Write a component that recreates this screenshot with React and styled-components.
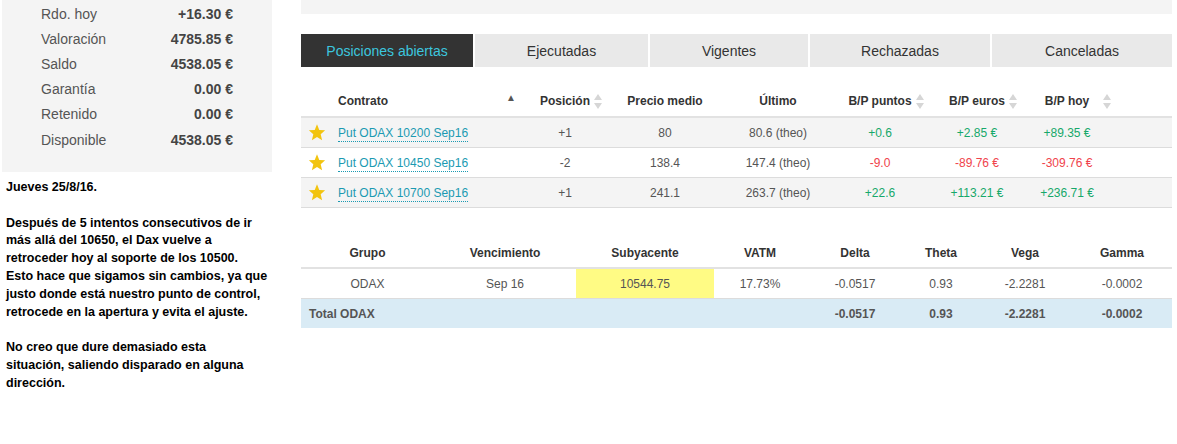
import styled, { createGlobalStyle } from "styled-components";

const GlobalStyle = createGlobalStyle`
	body {
		margin: 0;
		background: #fff;
		font-family: "Liberation Sans", Arial, sans-serif;
	}
`;

const summary = [
	["Rdo. hoy", "+16.30 €"],
	["Valoración", "4785.85 €"],
	["Saldo", "4538.05 €"],
	["Garantía", "0.00 €"],
	["Retenido", "0.00 €"],
	["Disponible", "4538.05 €"],
];

const tabs = [
	["Posiciones abiertas", 172],
	["Ejecutadas", 173],
	["Vigentes", 158],
	["Rechazadas", 180],
	["Canceladas", 180],
];

const positions = [
	["Put ODAX 10200 Sep16", "+1", "80", "80.6 (theo)", "+0.6", "+2.85 €", "+89.35 €", "up"],
	["Put ODAX 10450 Sep16", "-2", "138.4", "147.4 (theo)", "-9.0", "-89.76 €", "-309.76 €", "down"],
	["Put ODAX 10700 Sep16", "+1", "241.1", "263.7 (theo)", "+22.6", "+113.21 €", "+236.71 €", "up"],
];

const POS_COLS = "30px 192px 84px 116px 110px 94px 100px 80px 1fr";
const GRP_COLS = "133px 142px 138px 92px 98px 74px 94px 100px";

const Star = () => (
	<svg width="18" height="17" viewBox="0 0 24 23">
		<polygon
			points="12,0.5 15.1,8 23,8.6 17,13.8 18.9,22 12,17.6 5.1,22 7,13.8 1,8.6 8.9,8"
			fill="#f2c40f"
		/>
	</svg>
);

const SortBoth = ({ $gap }) => (
	<SortIcon $gap={$gap} width="8" height="15" viewBox="0 0 8 15">
		<polygon points="4,0 8,6 0,6" fill="#d6d6d6" />
		<polygon points="0,9 8,9 4,15" fill="#d6d6d6" />
	</SortIcon>
);

const App = () => {
	return (
		<>
			<GlobalStyle />
			<Page>
				<LeftColumn>
					<SummaryPanel>
						{summary.map(([label, value]) => (
							<SummaryRow key={label}>
								<SummaryLabel>{label}</SummaryLabel>
								<SummaryValue>{value}</SummaryValue>
							</SummaryRow>
						))}
					</SummaryPanel>
					<Note>
						<p>Jueves 25/8/16.</p>
						<p>
							Después de 5 intentos consecutivos de ir
							<br />
							más allá del 10650, el Dax vuelve a
							<br />
							retroceder hoy al soporte de los 10500.
							<br />
							Esto hace que sigamos sin cambios, ya que
							<br />
							justo donde está nuestro punto de control,
							<br />
							retrocede en la apertura y evita el ajuste.
						</p>
						<p>
							No creo que dure demasiado esta
							<br />
							situación, saliendo disparado en alguna
							<br />
							dirección.
						</p>
					</Note>
				</LeftColumn>

				<RightColumn>
					<TopBar />
					<Tabs>
						{tabs.map(([name, width], i) => (
							<Tab key={name} $width={width} $active={i === 0}>
								{name}
							</Tab>
						))}
					</Tabs>

					<PosTable>
						<PosHead>
							<span />
							<ContractHead>
								Contrato
								<SortUp>▲</SortUp>
							</ContractHead>
							<HeadCell>
								Posición
								<SortBoth />
							</HeadCell>
							<HeadCell>Precio medio</HeadCell>
							<HeadCell>Último</HeadCell>
							<HeadCell>
								B/P puntos
								<SortBoth />
							</HeadCell>
							<HeadCell>
								B/P euros
								<SortBoth />
							</HeadCell>
							<HeadCell>
								B/P hoy
								<SortBoth $gap={14} />
							</HeadCell>
							<span />
						</PosHead>
						{positions.map((p, i) => (
							<PosRow key={p[0]} $striped={i % 2 === 0}>
								<StarCell>
									<Star />
								</StarCell>
								<ContractCell>
									<ContractLink>{p[0]}</ContractLink>
								</ContractCell>
								<Cell>{p[1]}</Cell>
								<Cell>{p[2]}</Cell>
								<Cell>{p[3]}</Cell>
								<Cell $tone={p[7]}>{p[4]}</Cell>
								<Cell $tone={p[7]}>{p[5]}</Cell>
								<Cell $tone={p[7]}>{p[6]}</Cell>
								<span />
							</PosRow>
						))}
					</PosTable>

					<GroupTable>
						<GroupHead>
							{["Grupo", "Vencimiento", "Subyacente", "VATM", "Delta", "Theta", "Vega", "Gamma"].map(
								(h) => (
									<HeadCell key={h}>{h}</HeadCell>
								)
							)}
						</GroupHead>
						<GroupRow>
							<Cell>ODAX</Cell>
							<Cell>Sep 16</Cell>
							<Cell $highlight>10544.75</Cell>
							<Cell>17.73%</Cell>
							<Cell>-0.0517</Cell>
							<Cell>0.93</Cell>
							<Cell>-2.2281</Cell>
							<Cell>-0.0002</Cell>
						</GroupRow>
						<TotalRow>
							<TotalLabel>Total ODAX</TotalLabel>
							<TotalCell>-0.0517</TotalCell>
							<TotalCell>0.93</TotalCell>
							<TotalCell>-2.2281</TotalCell>
							<TotalCell>-0.0002</TotalCell>
						</TotalRow>
					</GroupTable>
				</RightColumn>
			</Page>
		</>
	);
};

export default App;

const Page = styled.div`
	display: flex;
	align-items: flex-start;
	width: 1177px;
	height: 444px;
	overflow: hidden;
`;

const LeftColumn = styled.div`
	width: 270px;
	margin-left: 2px;
	flex-shrink: 0;
`;

const SummaryPanel = styled.div`
	background: #f4f4f4;
	height: 172px;
	box-sizing: border-box;
	padding: 1px 39px 0 39px;
`;

const SummaryRow = styled.div`
	display: flex;
	justify-content: space-between;
	align-items: center;
	height: 25.2px;
	font-size: 14px;
`;

const SummaryLabel = styled.span`
	color: #555;
`;

const SummaryValue = styled.span`
	color: #444;
	font-weight: bold;
`;

const Note = styled.div`
	margin: 7px 0 0 4px;
	font-family: "Liberation Sans", Arial, sans-serif;
	font-size: 12.5px;
	font-weight: bold;
	line-height: 17.8px;
	color: #000;
	white-space: nowrap;

	p {
		margin: 0 0 17.8px;
	}
`;

const RightColumn = styled.div`
	width: 871px;
	margin-left: 29px;
	flex-shrink: 0;
`;

const TopBar = styled.div`
	height: 14px;
	background: #f4f4f4;
`;

const Tabs = styled.div`
	display: flex;
	gap: 2px;
	margin-top: 20px;
`;

const Tab = styled.div`
	width: ${(p) => p.$width}px;
	height: 33px;
	display: flex;
	align-items: center;
	justify-content: center;
	font-size: 14px;
	background: ${(p) => (p.$active ? "#333" : "#e9e9e9")};
	color: ${(p) => (p.$active ? "#3cc6df" : "#333")};
`;

const PosTable = styled.div`
	margin-top: 19px;
	font-size: 12px;
`;

const PosHead = styled.div`
	display: grid;
	grid-template-columns: ${POS_COLS};
	height: 30px;
	align-items: center;
	border-bottom: 2px solid #e2e2e2;
`;

const HeadCell = styled.div`
	display: flex;
	align-items: center;
	justify-content: center;
	font-weight: bold;
	color: #333;
`;

const ContractHead = styled.div`
	display: flex;
	justify-content: space-between;
	align-items: center;
	padding: 0 7px 0 7px;
	font-weight: bold;
	color: #333;
`;

const SortUp = styled.span`
	font-size: 10px;
	color: #555;
	margin-top: -8px;
`;

const SortIcon = styled.svg`
	margin-left: ${(p) => p.$gap || 4}px;
	margin-right: ${(p) => -((p.$gap || 4) + 8)}px;
`;

const PosRow = styled.div`
	display: grid;
	grid-template-columns: ${POS_COLS};
	height: 29px;
	align-items: center;
	background: ${(p) => (p.$striped ? "#f4f4f4" : "#fff")};
	border-bottom: 1px solid #dcdcdc;
`;

const StarCell = styled.div`
	display: flex;
	justify-content: center;
	padding-left: 2px;
`;

const ContractCell = styled.div`
	padding-left: 7px;
`;

const ContractLink = styled.span`
	color: #1b9ab2;
	border-bottom: 1px dotted #1b9ab2;
	padding-bottom: 1px;
`;

const Cell = styled.div`
	text-align: center;
	align-self: stretch;
	display: flex;
	align-items: center;
	justify-content: center;
	color: ${(p) => (p.$tone === "up" ? "#16a86a" : p.$tone === "down" ? "#f0434c" : "#555")};
	background: ${(p) => (p.$highlight ? "#fffb84" : "transparent")};
`;

const GroupTable = styled.div`
	margin-top: 30px;
	font-size: 12px;
`;

const GroupHead = styled.div`
	display: grid;
	grid-template-columns: ${GRP_COLS};
	height: 29px;
	align-items: center;
	border-bottom: 2px solid #e2e2e2;
`;

const GroupRow = styled.div`
	display: grid;
	grid-template-columns: ${GRP_COLS};
	height: 29px;
	border-bottom: 1px solid #dcdcdc;
`;

const TotalRow = styled.div`
	display: grid;
	grid-template-columns: ${GRP_COLS};
	height: 29px;
	align-items: center;
	background: #d9ebf5;
	font-weight: bold;
	color: #555;
`;

const TotalLabel = styled.div`
	grid-column: 1 / 5;
	padding-left: 8px;
`;

const TotalCell = styled.div`
	text-align: center;
`;
